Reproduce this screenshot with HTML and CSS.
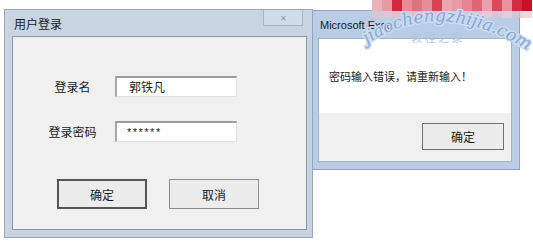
FILE: index.html
```html
<!DOCTYPE html>
<html lang="zh-CN">
<head>
    <meta charset="UTF-8">
    <meta name="viewport" content="width=device-width, initial-scale=1.0">
    <title>用户登录</title>
    <link rel="stylesheet" href="styles.css">
</head>
<body>
    <div class="desktop">
        <!-- 登录窗口 -->
        <div class="window login">
            <div class="titlebar">
                <span class="title">用户登录</span>
                <span class="close">&#x2715;</span>
            </div>
            <div class="client">
                <div class="fields">
                    <div class="row">
                        <label>登录名</label>
                        <div class="textbox">郭铁凡</div>
                    </div>
                    <div class="row">
                        <label>登录密码</label>
                        <div class="textbox pw">******</div>
                    </div>
                </div>
                <div class="buttons">
                    <button class="btn default">确定</button>
                    <button class="btn">取消</button>
                </div>
            </div>
        </div>

        <!-- 提示框 -->
        <div class="window msgbox">
            <div class="titlebar">
                <span class="title latin">Microsoft Excel</span>
            </div>
            <div class="client">
                <div class="message">密码输入错误，请重新输入！</div>
                <div class="footer">
                    <button class="btn">确定</button>
                </div>
            </div>
        </div>

        <!-- 水印 -->
        <div class="watermark">
            <div class="mosaic top">
                <i style="background:#eab2b8"></i><i style="background:#e79aa3"></i><i style="background:#d3283c"></i>
                <i style="background:#e58c97"></i><i style="background:#df7382"></i><i style="background:#e38d98"></i>
                <i style="background:#d94155"></i><i style="background:#e9a7b0"></i><i style="background:#ea9aa4"></i>
                <i style="background:#e58390"></i><i style="background:#df6676"></i><i style="background:#e9a0aa"></i>
                <i style="background:#d94a5c"></i><i style="background:#e892a0"></i><i style="background:#d52a3f"></i>
                <i style="background:#c8102a"></i>
            </div>
            <div class="mosaic second">
                <i style="background:#e3c4cc"></i><i style="background:#d8cad6"></i><i style="background:#e6bdc6"></i>
                <i style="background:#dccbd6"></i><i style="background:#e3bcc6"></i><i style="background:#d7c7d3"></i>
                <i style="background:#e6c0c9"></i><i style="background:#dccad4"></i><i style="background:#e4c2cb"></i>
                <i style="background:#d9c9d5"></i><i style="background:#e0c3cc"></i><i style="background:#e6cdd4"></i>
                <i style="background:#dcc6d0"></i><i style="background:#e8d0d7"></i><i style="background:#dcc4ce"></i>
                <i style="background:#e3ccd3"></i>
            </div>
            <svg class="wm-text" width="178" height="70" viewBox="0 0 178 70">
                <path id="arc" d="M12 44 Q 84 -4 172 50" fill="none"/>
                <text class="wm-cn" x="56" y="42">教 程 之 家</text>
                <text class="wm-url"><textPath href="#arc">jiaochengzhijia.com</textPath></text>
            </svg>
        </div>
    </div>
</body>
</html>
```

FILE: styles.css
```css
body {
    margin: 0;
    background: #ffffff;
    font-family: "Noto Sans CJK SC", "Liberation Sans", sans-serif;
}

.desktop {
    position: relative;
    width: 533px;
    height: 248px;
    overflow: hidden;
}

/* 窗口外框 */
.window {
    position: absolute;
    display: flex;
    flex-direction: column;
    box-sizing: border-box;
    border: 1px solid #9aa9ba;
}

.titlebar {
    display: flex;
    justify-content: space-between;
    align-items: flex-start;
    flex: none;
}

.title {
    font-size: 12px;
    color: #1a1a1a;
    line-height: 1;
}

.title.latin {
    font-family: "Liberation Sans", sans-serif;
    font-size: 11px;
}

.client {
    flex: 1;
    display: flex;
    flex-direction: column;
    box-sizing: border-box;
    border: 1px solid #8797ab;
}

/* 登录窗口 */
.login {
    left: 4px;
    top: 9px;
    width: 309px;
    height: 229px;
    padding: 0 5px 7px 7px;
    background: #c8d4e1;
}

.login .titlebar {
    height: 26px;
    padding-right: 4px;
}

.login .title {
    margin: 8px 0 0 2px;
}

.close {
    width: 40px;
    height: 16px;
    box-sizing: border-box;
    border: 1px solid #a7b4c3;
    border-top: none;
    background: #d2dce7;
    color: #8c96a2;
    font-size: 8px;
    display: flex;
    align-items: center;
    justify-content: center;
}

.login .client {
    background: #f0f0f0;
}

.fields {
    display: flex;
    flex-direction: column;
    gap: 24px;
    padding-top: 39px;
}

.row {
    display: flex;
    align-items: center;
}

.row label {
    width: 65px;
    margin-left: 27px;
    margin-right: 10px;
    text-align: center;
    font-size: 12px;
    color: #1a1a1a;
}

.textbox {
    width: 122px;
    height: 21px;
    box-sizing: border-box;
    background: #ffffff;
    border-top: 2px solid #9a9a9a;
    border-left: 2px solid #a8a8a8;
    border-right: 1px solid #e2e2e2;
    border-bottom: 1px solid #e2e2e2;
    padding-left: 12px;
    font-size: 12px;
    line-height: 18px;
    color: #1a1a1a;
}

.textbox.pw {
    font-family: "Liberation Sans", sans-serif;
    font-size: 11px;
    padding-left: 10px;
    letter-spacing: 1.5px;
}

.buttons {
    display: flex;
    gap: 22px;
    padding: 37px 0 0 44px;
}

.btn {
    width: 90px;
    height: 30px;
    box-sizing: border-box;
    background: #ececec;
    border: 1px solid #8c8c8c;
    border-radius: 0;
    font-family: "Noto Sans CJK SC", sans-serif;
    font-size: 12px;
    color: #1a1a1a;
    padding: 0;
}

.btn.default {
    border: 2px solid #555555;
}

/* 提示框 */
.msgbox {
    left: 312px;
    top: 10px;
    width: 208px;
    height: 160px;
    padding: 0 7px 7px 5px;
    background: #b9cde6;
    border-color: #8ea6c4;
}

.msgbox .titlebar {
    height: 27px;
}

.msgbox .title {
    margin: 9px 0 0 2px;
}

.msgbox .client {
    border-color: #9fb3cc;
}

.message {
    height: 74px;
    background: #ffffff;
    display: flex;
    align-items: center;
    padding-left: 10px;
    font-size: 11px;
    color: #1a1a1a;
}

.footer {
    flex: 1;
    background: #f0f0f0;
    display: flex;
    justify-content: flex-end;
    align-items: flex-start;
    padding: 10px 7px 0 0;
}

.footer .btn {
    width: 82px;
    height: 27px;
    border: 1px solid #707070;
}

/* 水印 */
.watermark {
    position: absolute;
    left: 355px;
    top: 0;
    width: 178px;
    height: 70px;
    pointer-events: none;
}

.mosaic {
    display: flex;
    margin-left: 17px;
}

.mosaic i {
    width: 10px;
    height: 11px;
    flex: none;
}

.mosaic.second i {
    height: 7px;
    opacity: 0.75;
}

.wm-text {
    position: absolute;
    left: 0;
    top: 0;
}

.wm-url {
    font-family: "DejaVu Serif", serif;
    font-style: italic;
    font-size: 17px;
    fill: #86a9d6;
    stroke: #cddcef;
    stroke-width: 3px;
    paint-order: stroke;
}

.wm-cn {
    font-family: "Noto Sans CJK SC", sans-serif;
    font-size: 11px;
    fill: #b2c7e4;
}
```
